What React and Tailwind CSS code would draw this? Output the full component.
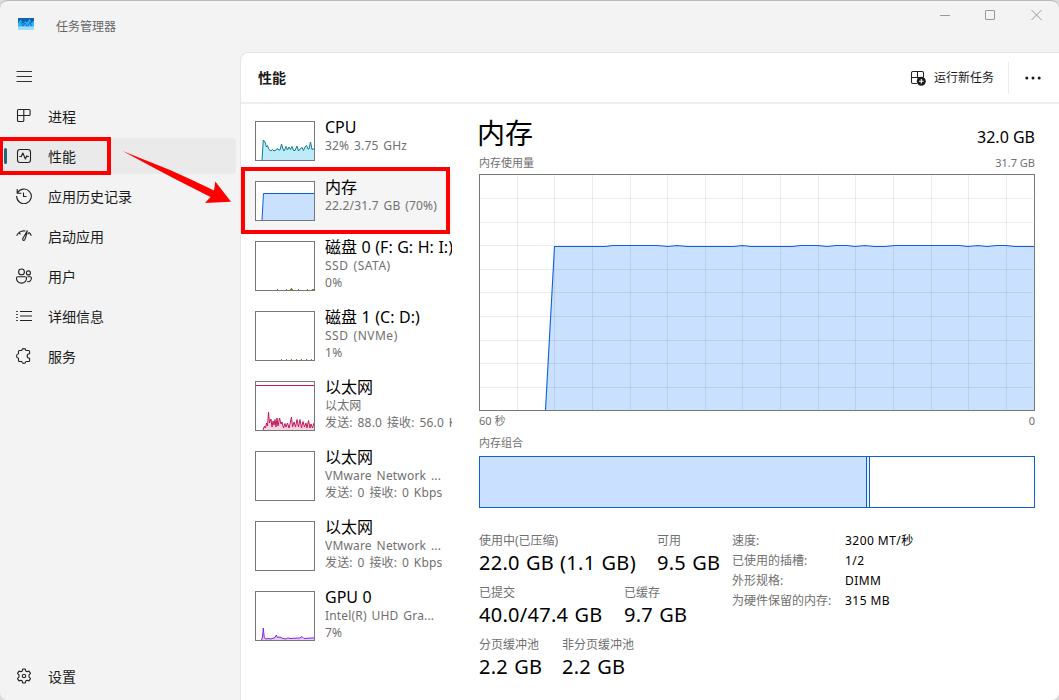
import React, { useState } from "react";
import clsx from "clsx";

const navItems = [
  { id: "processes", label: "进程" },
  { id: "performance", label: "性能" },
  { id: "history", label: "应用历史记录" },
  { id: "startup", label: "启动应用" },
  { id: "users", label: "用户" },
  { id: "details", label: "详细信息" },
  { id: "services", label: "服务" },
];

const iconShapes = {
  processes: (
    <path d="M2.5 1.5h10.6a1 1 0 0 1 1 1v4a1 1 0 0 1-1 1H1.5M7.8 1.5v11a1 1 0 0 1-1 1H2.5a1 1 0 0 1-1-1v-10a1 1 0 0 1 1-1" />
  ),
  performance: (
    <>
      <rect x="1.5" y="1.5" width="13" height="13" rx="2.5" />
      <path d="M3.3 8.5h2L6.8 5l2.6 6 1.4-3.2.6.7h1.4" />
    </>
  ),
  history: (
    <>
      <path d="M1.2 1v4.2h4.2M1.5 5A7.3 7.3 0 1 1 .7 8" />
      <path d="M7.5 4.5v4h3" />
    </>
  ),
  startup: (
    <>
      <path d="M.7 7.7A9 9 0 0 1 3 4.6l1.5 1.8M3.4 4.3A8 8 0 0 1 9.4 3M13 4.4a9 9 0 0 1 2.3 3.3M12.9 4.6l-1.2 1.7" />
      <path d="M11.3 2.7 6.7 10.7c-.5 1.4 1.1 2.3 2 1.1.8-1.5 1.8-5.2 2.6-9.1z" />
    </>
  ),
  users: (
    <>
      <circle cx="5.5" cy="3.9" r="2.9" />
      <circle cx="12.4" cy="4.9" r="2" />
      <path d="M2 8.8h7.2a1.3 1.3 0 0 1 1.3 1.3c0 3-1.8 5-5 5s-5-2-5-5A1.3 1.3 0 0 1 2 8.8zM11.5 8.8h2.6a1.3 1.3 0 0 1 1.3 1.3c0 2.3-1.5 4-4.2 3.5" />
    </>
  ),
  details: (
    <path d="M4 3.5h12M4 8h12M4 12.5h12M.2 3.5h1.6M.2 6.5h1.6M.2 9.5h1.6M.2 12.5h1.6" />
  ),
  services: (
    <path d="M3.5 2.5h2.3c.2-2.5 3.9-2.5 4.1 0h2.7a1 1 0 0 1 1 1v2.2c-3.3.2-3.3 4.3 0 4.5v2.3a1 1 0 0 1-1 1H9.9c-.2 2.5-3.9 2.5-4.1 0H3.5a1 1 0 0 1-1-1v-2.2c-2.6-.4-2.6-4.2 0-4.6V3.5a1 1 0 0 1 1-1z" />
  ),
  settings: (
    <>
      <circle cx="8" cy="8" r="1.7" />
      <path d="M6.8 1h2.4l.5 2 1.3.7 2-.6 1.5 2.3-1.5 1.5v2.2l1.5 1.5-1.5 2.3-2-.6-1.3.7-.5 2H6.8l-.5-2-1.3-.7-2 .6-1.5-2.3L3 9.1V6.9L1.5 5.4 3 3.1l2 .6L6.3 3z" />
    </>
  ),
};

const NavIcon = ({ name }) => (
  <svg
    className="w-4 h-4 shrink-0"
    viewBox="0 0 16 16"
    fill="none"
    stroke="#222"
    strokeWidth="1.1"
    strokeLinejoin="round"
  >
    {iconShapes[name]}
  </svg>
);

// Thumbnail graphs, drawn in a 60px wide box
const cpuPoints =
  "7,39 8.3,19 10,21 11.5,26 12.5,24.5 14,28.5 16,30 17.5,28.5 19,30 21,29 22,27.5 24,29 25,29 26.5,23 28,28 29,30 31,25.5 32.5,29 34,26 35.5,28.5 37,25.5 38.5,29.5 40,29.5 42,25 43.5,30 45,28 47,26.5 48.5,29.5 50,26 51.5,24.5 53,28 54,28 55.5,21 57,28.5 59.5,27.5";
const ethernetPoints =
  "8,49 9.5,45 10.5,47 11.5,42 12.5,45 13.5,31 14.5,42 16,38 17,46 18,40 19,44 20,38.5 21,46 22,37 23,45 24.5,37 26,43 27,41 28.5,47 30,42.5 31,46 32.5,42 34,47 35,43 36.5,36 37.5,46 39,41 40.5,46 42,38.5 43.5,46 45,38.5 46.5,47 48,40.5 49.5,46 51,42 52,47 53.5,39.5 55,47 56,43 57.5,47 59,42";
const gpuPoints =
  "6.5,49 7.5,46 8.3,37 9.3,47 11,48 13,47.5 16,48 20,46.5 21.3,44 22.5,46.5 24,46 26,46.5 28,47.5 31,48 33,46.8 35,47.5 40,47.2 45,47 47,45.5 49,47.5 59.5,46.8";

const devices = [
  {
    name: "CPU",
    lines: ["32% 3.75 GHz"],
    graph: { points: cpuPoints, stroke: "#117d92", fill: "#bfeaf8" },
  },
  {
    name: "内存",
    lines: ["22.2/31.7 GB (70%)"],
    graph: {
      points: "7,39 8.5,12.5 59.5,12.5",
      stroke: "#0f5fd7",
      fill: "#cae0ff",
    },
    selected: true,
  },
  {
    name: "磁盘 0 (F: G: H: I:)",
    lines: ["SSD (SATA)", "0%"],
    tall: true,
    disk: true,
    ticks: "M22 48.5h1M31 48.5h1M35 48.5h3M36 47.5h1M43 48.5h1M52 48.5h1M57 48.5h2",
  },
  {
    name: "磁盘 1 (C: D:)",
    lines: ["SSD (NVMe)", "1%"],
    tall: true,
    disk: true,
    ticks: "M26 48.5h1M31 48.5h1M36 48.5h1M41 48.5h1M46 48.5h1M51 48.5h1M56 48.5h1",
  },
  {
    name: "以太网",
    lines: ["以太网", "发送: 88.0 接收: 56.0 Kbps"],
    tall: true,
    graph: { points: ethernetPoints, stroke: "#c2185b", fill: "#f9d3df" },
    limit: true,
  },
  {
    name: "以太网",
    lines: ["VMware Network ...", "发送: 0 接收: 0 Kbps"],
    tall: true,
  },
  {
    name: "以太网",
    lines: ["VMware Network ...", "发送: 0 接收: 0 Kbps"],
    tall: true,
  },
  {
    name: "GPU 0",
    lines: ["Intel(R) UHD Gra...", "7%"],
    tall: true,
    graph: { points: gpuPoints, stroke: "#8424e0", fill: "#e3ccfa" },
  },
];

const Thumbnail = ({ device }) => {
  const height = device.tall ? 50 : 40;
  const { graph, ticks, limit } = device;
  return (
    <svg width="60" height={height} className="shrink-0">
      <rect width="60" height={height} fill="#fff" />
      {graph && (
        <>
          <polygon
            points={`${graph.points} 59.5,${height - 1} 7,${height - 1}`}
            fill={graph.fill}
          />
          <polyline points={graph.points} fill="none" stroke={graph.stroke} />
        </>
      )}
      {limit && <path d="M1 4.5h58" stroke="#c2185b" />}
      {ticks && <path d={ticks} stroke="#5c8a1e" />}
      <rect
        x="0.5"
        y="0.5"
        width="59"
        height={height - 1}
        fill="none"
        stroke="#777"
      />
    </svg>
  );
};

const DeviceRow = ({ device }) => (
  <div
    className={clsx(
      "flex w-[211px] gap-[10px] pl-[14px] pt-[10px] overflow-hidden",
      device.tall ? "h-[70px]" : "h-[60px]",
      device.selected && "bg-[#f5f5f5]"
    )}
  >
    <Thumbnail device={device} />
    <div className="-mt-1 whitespace-pre overflow-hidden">
      <div className="text-[16px] leading-5 [word-spacing:0.4px] text-black">
        {device.name}
      </div>
      {device.lines.map((line, index) => (
        <div
          key={index}
          className={clsx(
            "text-[12px] leading-[17px] [word-spacing:1.5px] text-[#707070]",
            device.disk ? "tracking-[0.5px]" : "tracking-[0.18px]"
          )}
        >
          {line}
        </div>
      ))}
    </div>
  </div>
);

const gridX = [38, 75, 113, 151, 188, 226, 263, 301, 339, 376, 414, 452, 489, 527];
const gridY = [24, 48, 71, 95, 118, 142, 166, 189, 213];
const usage =
  "66.5,236 75.5,72.5 126,72.5 134,71.5 178,71.5 189,72.5 198,71.5 208,72.5 255,72.5 263.5,71.5 272,72.5 313,72.5 322,71.5 339,71.5 348,72.5 357,71.5 368,71.5 376,72.5 386,71.5 395,72.5 406,72.5 416,71.5 480,71.5 489,72.5 499,71.5 508,72.5 518,71.5 527,71.5 536,72.5 555.5,72.5";

const UsageChart = () => (
  <svg width="556" height="237" className="block">
    <polygon points={`${usage} 555.5,236.5`} fill="#cae0ff" />
    {gridX.map((x) => (
      <path key={x} d={`M${x + 0.5} 1v235`} stroke="#000" strokeOpacity="0.075" />
    ))}
    {gridY.map((y) => (
      <path key={y} d={`M1 ${y + 0.5}h553`} stroke="#000" strokeOpacity="0.075" />
    ))}
    <polyline points={usage} fill="none" stroke="#0f5fd7" strokeWidth="1.1" />
    <rect x="0.5" y="0.5" width="555" height="236" fill="none" stroke="#777" />
  </svg>
);

const Stat = ({ label, value, className }) => (
  <div className={clsx("h-[52px] whitespace-nowrap", className)}>
    <div className="text-[12px] leading-[18px] text-[#707070]">{label}</div>
    <div className="text-[20px] leading-[26px] tracking-[0.28px] [word-spacing:0.6px] text-black">
      {value}
    </div>
  </div>
);

const hardware = [
  ["速度:", "3200 MT/秒"],
  ["已使用的插槽:", "1/2"],
  ["外形规格:", "DIMM"],
  ["为硬件保留的内存:", "315 MB"],
];

const MemoryDetails = () => (
  <div className="w-[556px] ml-[27px] pt-3">
    <div className="flex justify-between h-[38px]">
      <div className="-ml-0.5 text-[28px] leading-[34px] text-black">内存</div>
      <div className="text-[16px] leading-[42px] text-black">32.0 GB</div>
    </div>
    <div className="flex justify-between h-5 text-[11px] leading-[18px] text-[#707070]">
      <span>内存使用量</span>
      <span>31.7 GB</span>
    </div>
    <UsageChart />
    <div className="flex justify-between h-[22px] text-[11px] leading-[20px] text-[#707070]">
      <span>60 秒</span>
      <span>0</span>
    </div>
    <div className="h-[23px] text-[11px] leading-[20px] text-[#707070]">内存组合</div>
    <div className="flex h-[52px] border border-[#0f5fd7]">
      <div className="w-[387px] bg-[#cae0ff] border-r border-[#0f5fd7]" />
      <div className="w-[3px] bg-[#e6f0ff] border-r border-[#0f5fd7]" />
    </div>
    <div className="flex pt-[23px]">
      <div className="w-[253px] pt-px">
        <div className="flex">
          <Stat className="w-[178px]" label="使用中(已压缩)" value="22.0 GB (1.1 GB)" />
          <Stat label="可用" value="9.5 GB" />
        </div>
        <div className="flex">
          <Stat className="w-[145px]" label="已提交" value="40.0/47.4 GB" />
          <Stat label="已缓存" value="9.7 GB" />
        </div>
        <div className="flex">
          <Stat className="w-[83px]" label="分页缓冲池" value="2.2 GB" />
          <Stat label="非分页缓冲池" value="2.2 GB" />
        </div>
      </div>
      <div className="text-[12px] leading-5 whitespace-nowrap">
        {hardware.map(([label, value]) => (
          <div key={label} className="flex">
            <span className="w-[113px] text-[#707070]">{label}</span>
            <span className="tracking-[0.45px] text-black">{value}</span>
          </div>
        ))}
      </div>
    </div>
  </div>
);

const TitleBar = () => (
  <header className="flex h-[51px] shrink-0 pl-[18px] pr-[17px]">
    <svg width="16" height="12" className="mt-[17px]">
      <rect width="16" height="12" fill="#0d63b5" />
      <path d="M0 5.5 2.5 1.5 5 6 7.5 3 9 5 11.5 1 13.5 5 16 2.5V12H0z" fill="#35b2f5" />
      <path d="M2.8 4 5 8l2-3 2.5 4L12 4l1.5 4" fill="none" stroke="#0d74cc" />
      <path d="M0 8.500h16V12H0z" fill="#9bdffd" />
    </svg>
    <span className="ml-[22px] mt-[17px] text-[12px] leading-[18px] text-[#666]">
      任务管理器
    </span>
    <svg width="102" height="12" className="ml-auto mt-2" fill="none" stroke="#999">
      <path d="M0 6.5h10M91.5 1l10 10M101.5 1l-10 10" />
      <rect x="45.5" y="1.5" width="9" height="9" rx="0.5" />
    </svg>
  </header>
);

const NavButton = ({ id, label, active, onClick }) => (
  <button
    onClick={onClick}
    className={clsx(
      "flex items-center gap-4 w-[232px] h-9 ml-1 mt-1 rounded text-[14px] text-[#1b1b1b]",
      active && "bg-[#eaeaea]"
    )}
  >
    <span
      className={clsx("w-[3px] h-4 rounded-full -mr-[7px]", active && "bg-[#1c6a7d]")}
    />
    <NavIcon name={id} />
    <span>{label}</span>
  </button>
);

const App = () => {
  const [page, setPage] = useState("performance");

  return (
    <div className="relative w-[1059px] h-[700px] overflow-hidden bg-[#dcdcdc] font-['Noto_Sans','Noto_Sans_CJK_SC',sans-serif]">
      <div className="flex flex-col h-full rounded-[8px] overflow-hidden bg-[#f3f3f3] border-t border-[#b9b9b9]">
        <TitleBar />
        <div className="flex flex-1 min-h-0">
          <nav className="flex flex-col w-[240px] pt-[6px] pb-[6px]">
            <svg width="16" height="36" className="ml-4" stroke="#333" fill="none">
              <path d="M.5 13.5H16M.5 18.5H16M.5 23.5H16" />
            </svg>
            {navItems.map((item) => (
              <NavButton
                key={item.id}
                {...item}
                active={page === item.id}
                onClick={() => setPage(item.id)}
              />
            ))}
            <div className="mt-auto">
              <NavButton id="settings" label="设置" />
            </div>
          </nav>

          <main className="flex flex-col flex-1 bg-white border-t border-l border-[#e5e5e5] rounded-tl-[8px]">
            <div className="flex items-center h-[51px] shrink-0 border-b-2 border-[#efefef] pl-[17px] pr-[18px]">
              <h1 className="text-[14px] font-bold text-[#1b1b1b]">性能</h1>
              <button className="flex items-center gap-2 ml-auto text-[12px] text-[#1b1b1b]">
                <svg width="16" height="16" fill="none" stroke="#222" strokeWidth="1.1">
                  <path d="M7 13.5H3a1.5 1.5 0 0 1-1.5-1.5V3A1.5 1.5 0 0 1 3 1.5h9A1.5 1.5 0 0 1 13.5 3v4M7.5 1.5v7M1.5 7.5h12" />
                  <circle cx="11.3" cy="11.3" r="4.5" fill="#1b1b1b" stroke="none" />
                  <path d="M11.3 9v4.6M9 11.3h4.6" stroke="#fff" />
                </svg>
                <span>运行新任务</span>
              </button>
              <div className="w-px h-8 ml-[14px] mr-4 bg-[#ececec]" />
              <svg width="16" height="4" fill="#1b1b1b">
                <circle cx="1.8" cy="2" r="1.5" />
                <circle cx="8" cy="2" r="1.5" />
                <circle cx="14.2" cy="2" r="1.5" />
              </svg>
            </div>
            <div className="flex flex-1 min-h-0">
              <div className="pt-[7px]">
                {devices.map((device, index) => (
                  <DeviceRow key={index} device={device} />
                ))}
              </div>
              <MemoryDetails />
            </div>
          </main>
        </div>
      </div>

      {/* Callouts */}
      <div className="absolute left-[-1px] top-[137px] w-[112px] h-[38px] border-4 border-[#ff0000]" />
      <div className="absolute left-[241px] top-[167px] w-[209px] h-[67px] border-4 border-[#ff0000]" />
      <svg className="absolute left-[120px] top-[148px]" width="114" height="60">
        <path
          d="M2.5 3 50 22 72 32 94 42.5 95.3 33.5 111 53.7 85 55 90.5 49 57 32 38 22z"
          fill="#ff0000"
        />
      </svg>
    </div>
  );
};

export default App;
